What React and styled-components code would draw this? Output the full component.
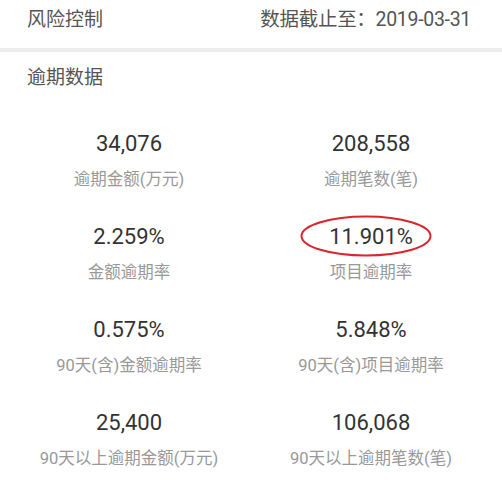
import React from 'react';
import styled, { createGlobalStyle } from 'styled-components';

const GlobalStyle = createGlobalStyle`
  body {
    margin: 0;
    background: #fff;
    font-family: Roboto, "Noto Sans CJK SC", sans-serif;
  }
`;

const Page = styled.div`
  width: 502px;
  height: 489px;
  background: #fff;
  overflow: hidden;
`;

const Header = styled.div`
  height: 48px;
  padding: 8px 31px 0 27px;
  box-sizing: border-box;
  display: flex;
  justify-content: space-between;
  align-items: flex-start;
  line-height: 24px;
  color: #555;
`;

const Title = styled.div`
  font-size: 19px;
`;

const DateText = styled.div`
  font-size: 19.5px;
  white-space: nowrap;
  letter-spacing: -0.3px;
`;

const Divider = styled.div`
  height: 4px;
  background: #ededed;
`;

const SectionTitle = styled.div`
  padding: 14px 27px 0;
  font-size: 19px;
  line-height: 24px;
  color: #555;
`;

const Grid = styled.div`
  display: grid;
  grid-template-columns: 242px 242px;
  row-gap: 32px;
  padding: 40px 0 0 8px;
`;

const Cell = styled.div`
  display: flex;
  flex-direction: column;
  align-items: center;
`;

const ValueWrap = styled.div`
  position: relative;
  height: 28px;
  display: flex;
  align-items: center;
`;

const Value = styled.div`
  font-size: 22px;
  line-height: 28px;
  color: #333;
`;

const Label = styled.div`
  margin-top: 11px;
  font-size: 16.5px;
  line-height: 22px;
  color: #999;
`;

const Mark = styled.svg`
  position: absolute;
  left: 50%;
  top: 50%;
  width: 134px;
  height: 44px;
  transform: translate(-72px, -23px);
  overflow: visible;
`;

const items = [
  { value: '34,076', label: '逾期金额(万元)' },
  { value: '208,558', label: '逾期笔数(笔)' },
  { value: '2.259%', label: '金额逾期率' },
  { value: '11.901%', label: '项目逾期率', marked: true },
  { value: '0.575%', label: '90天(含)金额逾期率' },
  { value: '5.848%', label: '90天(含)项目逾期率' },
  { value: '25,400', label: '90天以上逾期金额(万元)' },
  { value: '106,068', label: '90天以上逾期笔数(笔)' },
];

export default function App() {
  return (
    <Page>
      <GlobalStyle />
      <Header>
        <Title>风险控制</Title>
        <DateText>数据截止至：2019-03-31</DateText>
      </Header>
      <Divider />
      <SectionTitle>逾期数据</SectionTitle>
      <Grid>
        {items.map((item) => (
          <Cell key={item.label}>
            <ValueWrap>
              <Value>{item.value}</Value>
              {item.marked && (
                <Mark viewBox="0 0 134 44">
                  <ellipse cx="67" cy="22" rx="64.5" ry="19.5" fill="none" stroke="#d8262c" strokeWidth="2" />
                </Mark>
              )}
            </ValueWrap>
            <Label>{item.label}</Label>
          </Cell>
        ))}
      </Grid>
    </Page>
  );
}
